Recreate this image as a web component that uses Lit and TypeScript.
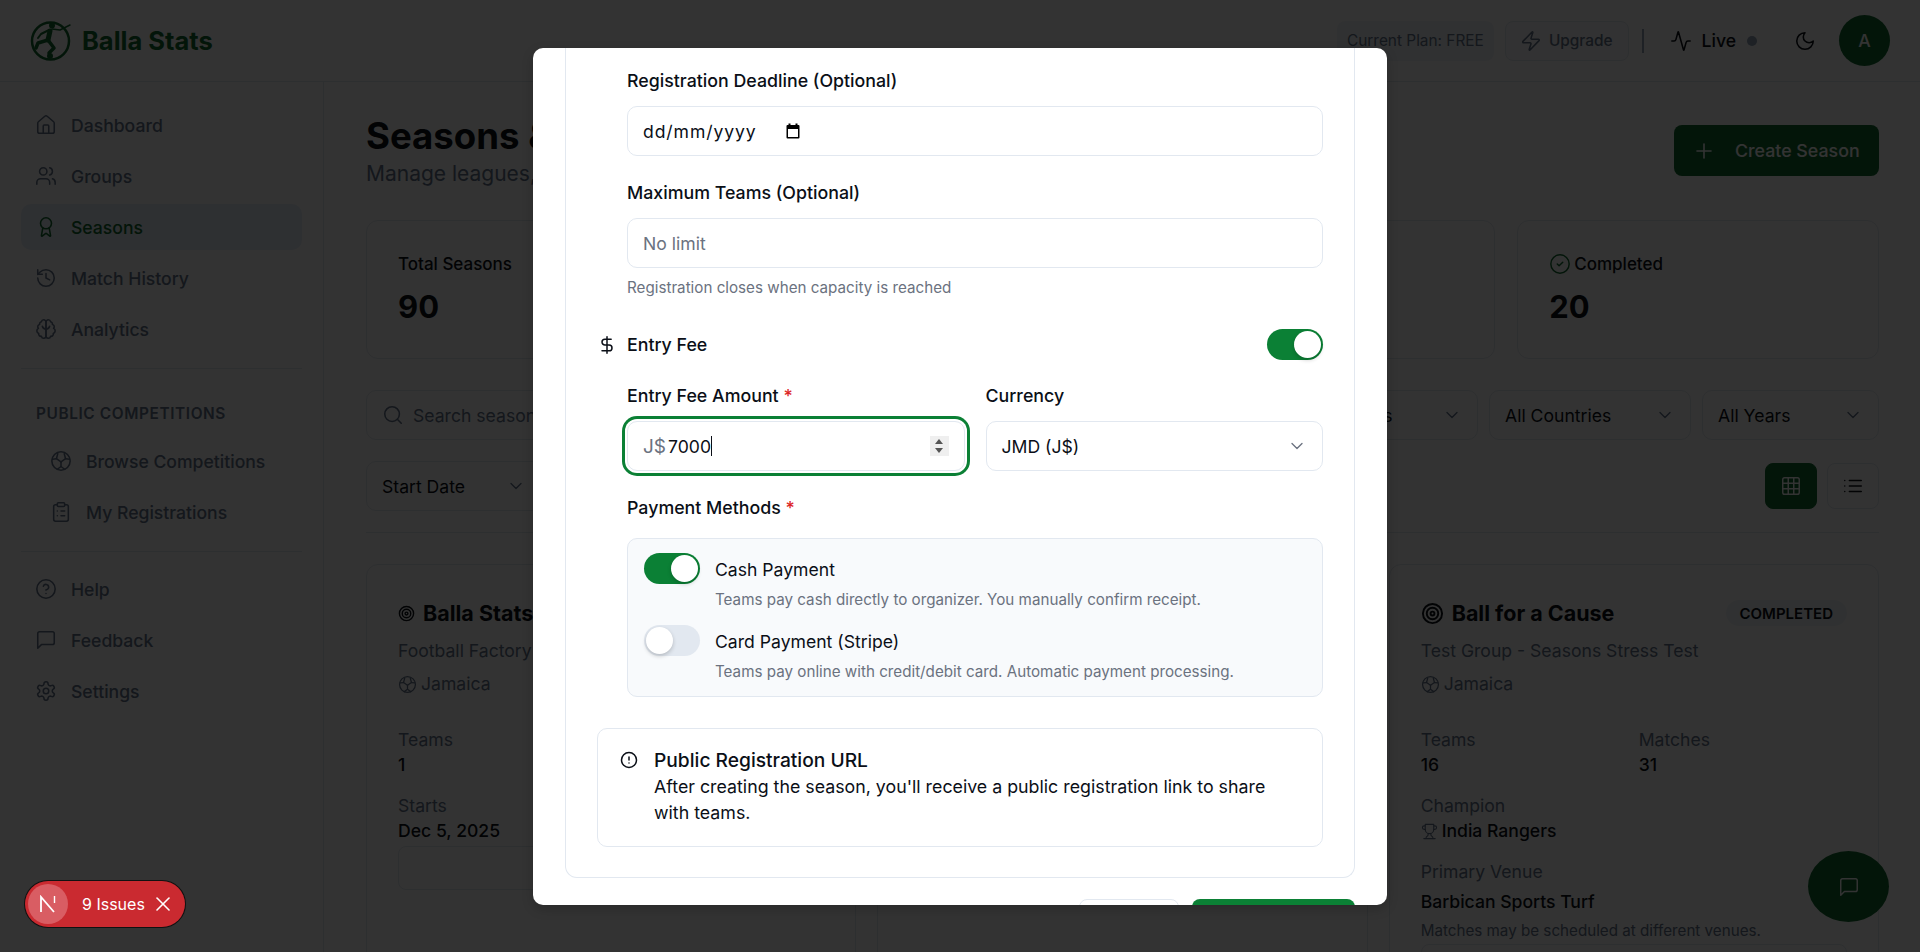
import { LitElement, html, css, svg } from "lit";
import { customElement } from "lit/decorators.js";

const icon = (body: unknown, size = 22, sw = 1.7) => html`<svg
  class="ic"
  width=${size}
  height=${size}
  viewBox="0 0 24 24"
  fill="none"
  stroke="currentColor"
  stroke-width=${sw}
  stroke-linecap="round"
  stroke-linejoin="round"
>${body}</svg>`;

const I = {
  home: svg`<path d="M15 21v-8a1 1 0 0 0-1-1h-4a1 1 0 0 0-1 1v8"/><path d="M3 10a2 2 0 0 1 .709-1.528l7-5.999a2 2 0 0 1 2.582 0l7 5.999A2 2 0 0 1 21 10v9a2 2 0 0 1-2 2H5a2 2 0 0 1-2-2z"/>`,
  users: svg`<path d="M16 21v-2a4 4 0 0 0-4-4H6a4 4 0 0 0-4 4v2"/><circle cx="9" cy="7" r="4"/><path d="M22 21v-2a4 4 0 0 0-3-3.87"/><path d="M16 3.13a4 4 0 0 1 0 7.75"/>`,
  award: svg`<path d="m15.477 12.89 1.515 8.526a.5.5 0 0 1-.81.47l-3.58-2.687a1 1 0 0 0-1.197 0l-3.586 2.686a.5.5 0 0 1-.81-.469l1.514-8.526"/><circle cx="12" cy="8" r="6"/>`,
  history: svg`<path d="M3 12a9 9 0 1 0 9-9 9.75 9.75 0 0 0-6.74 2.74L3 8"/><path d="M3 3v5h5"/><path d="M12 7v5l4 2"/>`,
  brain: svg`<path d="M9.5 2A2.5 2.5 0 0 1 12 4.5v15a2.5 2.5 0 0 1-4.96.44 2.5 2.5 0 0 1-2.96-3.08 3 3 0 0 1-.34-5.58 2.5 2.5 0 0 1 1.32-4.24 2.5 2.5 0 0 1 1.98-3A2.5 2.5 0 0 1 9.5 2Z"/><path d="M14.5 2A2.5 2.5 0 0 0 12 4.5v15a2.5 2.5 0 0 0 4.96.44 2.5 2.5 0 0 0 2.96-3.08 3 3 0 0 0 .34-5.58 2.5 2.5 0 0 0-1.32-4.24 2.5 2.5 0 0 0-1.98-3A2.5 2.5 0 0 0 14.5 2Z"/><path d="M12 12c-2 0-3.5-1-4-3"/><path d="M12 12c2 0 3.5-1 4-3"/>`,
  ball: svg`<circle cx="12" cy="12" r="10"/><path d="M12 13 7 9.5l1.5-5.5"/><path d="M12 13l5-3.5-1.5-5.5"/><path d="M12 13v5l-4 3"/><path d="M12 18l4 3"/><path d="M7 9.5 2.5 10"/><path d="M17 9.5l4.5.5"/>`,
  clipboard: svg`<rect width="8" height="4" x="8" y="2" rx="1"/><path d="M16 4h2a2 2 0 0 1 2 2v14a2 2 0 0 1-2 2H6a2 2 0 0 1-2-2V6a2 2 0 0 1 2-2h2"/><path d="M12 11h4"/><path d="M12 16h4"/><path d="M8 11h.01"/><path d="M8 16h.01"/>`,
  help: svg`<circle cx="12" cy="12" r="10"/><path d="M9.09 9a3 3 0 0 1 5.83 1c0 2-3 3-3 3"/><path d="M12 17h.01"/>`,
  message: svg`<path d="M21 15a2 2 0 0 1-2 2H7l-4 4V5a2 2 0 0 1 2-2h14a2 2 0 0 1 2 2z"/>`,
  gear: svg`<path d="M12.22 2h-.44a2 2 0 0 0-2 2v.18a2 2 0 0 1-1 1.73l-.43.25a2 2 0 0 1-2 0l-.15-.08a2 2 0 0 0-2.73.73l-.22.38a2 2 0 0 0 .73 2.73l.15.1a2 2 0 0 1 1 1.72v.51a2 2 0 0 1-1 1.74l-.15.09a2 2 0 0 0-.73 2.73l.22.38a2 2 0 0 0 2.73.73l.15-.08a2 2 0 0 1 2 0l.43.25a2 2 0 0 1 1 1.73V20a2 2 0 0 0 2 2h.44a2 2 0 0 0 2-2v-.18a2 2 0 0 1 1-1.73l.43-.25a2 2 0 0 1 2 0l.15.08a2 2 0 0 0 2.73-.73l.22-.39a2 2 0 0 0-.73-2.73l-.15-.08a2 2 0 0 1-1-1.74v-.5a2 2 0 0 1 1-1.74l.15-.09a2 2 0 0 0 .73-2.73l-.22-.38a2 2 0 0 0-2.73-.73l-.15.08a2 2 0 0 1-2 0l-.43-.25a2 2 0 0 1-1-1.73V4a2 2 0 0 0-2-2z"/><circle cx="12" cy="12" r="3"/>`,
  zap: svg`<path d="M4 14a1 1 0 0 1-.78-1.63l9.9-10.2a.5.5 0 0 1 .86.46l-1.92 6.02A1 1 0 0 0 13 10h7a1 1 0 0 1 .78 1.63l-9.9 10.2a.5.5 0 0 1-.86-.46l1.92-6.02A1 1 0 0 0 11 14z"/>`,
  activity: svg`<path d="M22 12h-2.48a2 2 0 0 0-1.93 1.46l-2.35 8.36a.25.25 0 0 1-.48 0L9.24 2.18a.25.25 0 0 0-.48 0l-2.35 8.36A2 2 0 0 1 4.49 12H2"/>`,
  moon: svg`<path d="M12 3a6 6 0 0 0 9 9 9 9 0 1 1-9-9Z"/>`,
  search: svg`<circle cx="11" cy="11" r="8"/><path d="m21 21-4.3-4.3"/>`,
  chevron: svg`<path d="m6 9 6 6 6-6"/>`,
  plus: svg`<path d="M5 12h14"/><path d="M12 5v14"/>`,
  grid: svg`<rect width="18" height="18" x="3" y="3" rx="2"/><path d="M3 9h18"/><path d="M3 15h18"/><path d="M9 3v18"/><path d="M15 3v18"/>`,
  list: svg`<path d="M3 12h.01"/><path d="M3 18h.01"/><path d="M3 6h.01"/><path d="M8 12h13"/><path d="M8 18h13"/><path d="M8 6h13"/>`,
  target: svg`<circle cx="12" cy="12" r="10"/><circle cx="12" cy="12" r="6"/><circle cx="12" cy="12" r="2"/>`,
  check: svg`<circle cx="12" cy="12" r="10"/><path d="m9 12 2 2 4-4"/>`,
  trophy: svg`<path d="M6 9H4.5a2.5 2.5 0 0 1 0-5H6"/><path d="M18 9h1.5a2.5 2.5 0 0 0 0-5H18"/><path d="M4 22h16"/><path d="M10 14.66V17c0 .55-.47.98-.97 1.21C7.85 18.75 7 20.24 7 22"/><path d="M14 14.66V17c0 .55.47.98.97 1.21C16.15 18.75 17 20.24 17 22"/><path d="M18 2H6v7a6 6 0 0 0 12 0V2Z"/>`,
  dollar: svg`<line x1="12" x2="12" y1="2" y2="22"/><path d="M17 5H9.5a3.5 3.5 0 0 0 0 7h5a3.5 3.5 0 0 1 0 7H6"/>`,
  alert: svg`<circle cx="12" cy="12" r="10"/><line x1="12" x2="12" y1="8" y2="12"/><line x1="12" x2="12.01" y1="16" y2="16"/>`,
  x: svg`<path d="M18 6 6 18"/><path d="m6 6 12 12"/>`,
};

const navMain = [
  { label: "Dashboard", ic: I.home },
  { label: "Groups", ic: I.users },
  { label: "Seasons", ic: I.award, active: true },
  { label: "Match History", ic: I.history },
  { label: "Analytics", ic: I.brain },
];
const navPublic = [
  { label: "Browse Competitions", ic: I.ball },
  { label: "My Registrations", ic: I.clipboard },
];
const navBottom = [
  { label: "Help", ic: I.help },
  { label: "Feedback", ic: I.message },
  { label: "Settings", ic: I.gear },
];

@customElement("app-root")
export class AppRoot extends LitElement {
  static styles = css`
    :host {
      display: block;
      height: 100vh;
      overflow: hidden;
      position: relative;
      background: #fff;
      color: #0b0f17;
      font-family: Inter, "Liberation Sans", sans-serif;
      font-size: 17.6px;
    }
    * {
      box-sizing: border-box;
    }
    .ic {
      flex: none;
      display: block;
    }

    .topbar {
      height: 82px;
      border-bottom: 1px solid #e2e8f0;
      display: flex;
      align-items: center;
      padding: 0 30px;
    }
    .brand {
      display: flex;
      align-items: center;
      gap: 10px;
      color: #126a30;
      font-size: 25.5px;
      font-weight: 700;
    }
    .top-right {
      margin-left: auto;
      display: flex;
      align-items: center;
    }
    .chip {
      height: 40px;
      border-radius: 8px;
      background: #f1f5f9;
      font-size: 15.4px;
      color: #64748b;
      display: flex;
      align-items: center;
      padding: 0 10px;
      gap: 7px;
    }
    .chip.outline {
      background: #f8fafc;
      border: 1px solid #e2e8f0;
      margin-left: 11px;
      padding: 0 15px 0 14px;
      font-weight: 500;
    }
    .sep {
      width: 2px;
      height: 24px;
      background: #94a3b8;
      margin: 0 26px 0 13px;
    }
    .live {
      display: flex;
      align-items: center;
      gap: 10px;
      font-weight: 500;
    }
    .dot {
      width: 10px;
      height: 10px;
      border-radius: 50%;
      background: #94a3b8;
      margin-left: 1px;
    }
    .moon {
      margin: 0 23px 0 37px;
    }
    .avatar {
      width: 51px;
      height: 51px;
      border-radius: 50%;
      background: #126a30;
      color: #fff;
      font-weight: 500;
      display: flex;
      align-items: center;
      justify-content: center;
    }

    .shell {
      display: grid;
      grid-template-columns: 324px 1fr;
      height: calc(100vh - 82px);
    }
    .side {
      border-right: 1px solid #e2e8f0;
      padding: 20px 21px;
      color: #64748b;
    }
    .nav {
      display: flex;
      flex-direction: column;
      gap: 5px;
    }
    .nav a {
      height: 46px;
      border-radius: 10px;
      display: flex;
      align-items: center;
      gap: 14px;
      padding: 0 14px;
      font-weight: 500;
    }
    .nav a.active {
      background: #e7eef7;
      color: #126a30;
    }
    .nav.sub a {
      padding-left: 29px;
    }
    .rule {
      height: 1px;
      background: #e2e8f0;
      margin: 16px 0;
    }
    .rule.tight {
      margin-bottom: 14px;
    }
    .cap {
      font-size: 15.4px;
      font-weight: 600;
      letter-spacing: 0.6px;
      padding: 19px 15px 14px;
      line-height: 20px;
    }

    .main {
      padding: 0 41px 0 42px;
      overflow: hidden;
    }
    .page-head {
      display: flex;
      justify-content: space-between;
      padding-top: 31px;
      height: 138px;
    }
    h1 {
      margin: 0;
      font-size: 36.6px;
      line-height: 46px;
      font-weight: 700;
      white-space: nowrap;
    }
    .page-head p {
      margin: 2px 0 0;
      font-size: 21px;
      color: #64748b;
    }
    .create {
      margin-top: 12px;
      width: 205px;
      height: 51px;
      border-radius: 8px;
      background: #126a30;
      color: #fff;
      display: flex;
      align-items: center;
      gap: 19px;
      padding: 0 18px;
      font-weight: 500;
      font-size: 17.8px;
    }
    .stats {
      display: grid;
      grid-template-columns: repeat(4, 1fr);
      gap: 22px;
      height: 139px;
    }
    .stat {
      border: 1px solid #e2e8f0;
      border-radius: 12px;
      padding: 30px 31px;
      font-size: 17px;
      font-weight: 500;
    }
    .stat .t {
      display: flex;
      align-items: center;
      gap: 3px;
      height: 26px;
    }
    .stat .t .ic {
      color: #126a30;
    }
    .stat .n {
      font-size: 31px;
      font-weight: 700;
      margin-top: 11px;
    }
    .filters {
      display: flex;
      gap: 11px;
      margin-top: 31px;
    }
    .box {
      height: 50px;
      border: 1px solid #e2e8f0;
      border-radius: 10px;
      display: flex;
      align-items: center;
      padding: 0 15px;
      justify-content: space-between;
    }
    .search {
      flex: 1;
      justify-content: flex-start;
      gap: 9px;
      color: #64748b;
    }
    .box .ic {
      color: #64748b;
    }
    .filters-2 {
      display: flex;
      justify-content: space-between;
      margin-top: 21px;
      padding-bottom: 21px;
      border-bottom: 1px solid #e2e8f0;
    }
    .views {
      display: flex;
      gap: 10px;
      align-items: center;
    }
    .view {
      width: 52px;
      height: 46px;
      border-radius: 8px;
      border: 1px solid #e2e8f0;
      display: flex;
      align-items: center;
      justify-content: center;
    }
    .view.on {
      background: #126a30;
      border-color: #126a30;
      color: #fff;
    }
    .cards {
      display: grid;
      grid-template-columns: repeat(3, 1fr);
      gap: 21px;
      margin-top: 31px;
    }
    .card {
      border: 1px solid #e2e8f0;
      border-radius: 12px;
      padding: 32px 31px;
      height: 500px;
    }
    .card .title {
      display: flex;
      align-items: center;
      gap: 8px;
      font-size: 21.5px;
      font-weight: 700;
      height: 32px;
    }
    .badge {
      margin-left: auto;
      background: #f1f5f9;
      border-radius: 13px;
      height: 26px;
      font-size: 15px;
      font-weight: 600;
      display: flex;
      align-items: center;
      padding: 0 14px;
    }
    .muted {
      color: #64748b;
    }
    .org {
      margin-top: 9px;
      line-height: 26px;
    }
    .country {
      margin-top: 7px;
      line-height: 26px;
      display: flex;
      align-items: center;
      gap: 4px;
    }
    .pair {
      display: grid;
      grid-template-columns: 218px 1fr;
      margin-top: 30px;
    }
    .kv {
      line-height: 25px;
    }
    .kv b {
      display: block;
      font-weight: 500;
      color: #0b0f17;
      line-height: 26px;
    }
    .kv.next {
      margin-top: 15px;
    }
    .champ {
      display: flex !important;
      align-items: center;
      gap: 4px;
    }
    .champ .ic {
      color: #64748b;
    }
    .slot {
      border: 1px solid #e2e8f0;
      border-radius: 8px;
      height: 44px;
      margin-top: 2px;
    }

    .fab {
      position: absolute;
      left: 1808px;
      top: 851px;
      width: 81px;
      height: 71px;
      border-radius: 50%;
      background: #126a30;
      color: #fff;
      display: flex;
      align-items: center;
      justify-content: center;
    }

    .overlay {
      position: absolute;
      inset: 0;
      background: rgba(0, 0, 0, 0.8);
      display: flex;
      align-items: center;
      justify-content: center;
    }
    .modal {
      width: 854px;
      height: 857px;
      background: #fff;
      border-radius: 10px;
      overflow: hidden;
      padding: 0 32px;
      box-shadow: 0 4px 12px rgba(0, 0, 0, 0.2);
      font-size: 17.6px;
    }
    .form {
      border: 1px solid #e2e8f0;
      border-top: 0;
      border-radius: 0 0 12px 12px;
      padding: 20.5px 31px 31px;
      height: 830.5px;
    }
    .indent {
      padding-left: 30px;
    }
    .label {
      font-weight: 500;
      font-size: 17.8px;
      line-height: 26px;
      height: 26px;
      margin-bottom: 12px;
    }
    .label i {
      color: #dc2626;
      font-style: normal;
    }
    .field {
      height: 50px;
      border: 1px solid #e2e8f0;
      border-radius: 10px;
      padding: 0 15px;
      display: flex;
      align-items: center;
      background: #fff;
    }
    .field .ic {
      color: #6b7280;
    }
    .field.date {
      gap: 28px;
    }
    .field.date span {
      letter-spacing: 0.9px;
    }
    .group + .group {
      margin-top: 24px;
    }
    .hint {
      font-size: 15.2px;
      color: #6b7280;
      line-height: 20px;
      margin-top: 10px;
    }
    .ph {
      color: #6b7280;
    }
    .fee-head {
      display: flex;
      align-items: center;
      height: 31px;
      margin-top: 31px;
      font-weight: 500;
      font-size: 17.8px;
    }
    .fee-head .ic {
      margin-right: 10px;
    }
    .switch {
      width: 56px;
      height: 31px;
      border-radius: 16px;
      background: #0b8035;
      position: relative;
      flex: none;
    }
    .switch::after {
      content: "";
      position: absolute;
      top: 2px;
      right: 2px;
      width: 27px;
      height: 27px;
      border-radius: 50%;
      background: #fff;
      box-shadow: 0 2px 4px rgba(0, 0, 0, 0.2);
    }
    .switch.off {
      background: #e2e8f0;
    }
    .switch.off::after {
      right: auto;
      left: 2px;
    }
    .fee-head .switch {
      margin-left: auto;
    }
    .fee-grid {
      display: grid;
      grid-template-columns: 1fr 1fr;
      gap: 21px;
      margin-top: 23px;
    }
    .focus {
      box-shadow: 0 0 0 2px #fff, 0 0 0 5px #0b8035;
      position: relative;
    }
    .prefix {
      color: #6b7280;
      font-size: 19px;
      margin-right: 2px;
    }
    .caret {
      width: 1px;
      height: 20px;
      background: #0b0f17;
    }
    .spin {
      position: absolute;
      right: 15px;
      top: 14px;
      width: 19px;
      height: 20px;
      background: #efefef;
      display: flex;
      flex-direction: column;
      align-items: center;
      justify-content: center;
      gap: 4px;
    }
    .spin s {
      width: 0;
      height: 0;
      border-left: 4px solid transparent;
      border-right: 4px solid transparent;
      border-bottom: 5px solid #555;
    }
    .spin s + s {
      border-bottom: 0;
      border-top: 5px solid #555;
    }
    .between {
      justify-content: space-between;
    }
    .pay-label {
      margin-top: 24px;
      margin-bottom: 17px;
    }
    .methods {
      border: 1px solid #e2e8f0;
      border-radius: 10px;
      background: #f8fafc;
      padding: 14px 16px;
      height: 159px;
    }
    .method {
      display: flex;
      gap: 15px;
      height: 72px;
    }
    .method .name {
      font-weight: 400;
      padding-top: 4px;
      line-height: 26px;
      height: 35px;
    }
    .method .desc {
      font-size: 15.2px;
      line-height: 24px;
      color: #6b7280;
    }
    .notice {
      border: 1px solid #e2e8f0;
      border-radius: 10px;
      height: 119px;
      margin-top: 31px;
      padding: 18px 22px;
      display: flex;
      gap: 16px;
    }
    .notice .ic {
      margin-top: 4px;
    }
    .notice h4 {
      margin: 0;
      font-size: 19.2px;
      font-weight: 500;
      line-height: 26px;
    }
    .notice p {
      margin: 1px 0 0;
      padding-right: 20px;
      line-height: 26px;
      font-size: 17.8px;
    }
    .footer {
      display: flex;
      justify-content: flex-end;
      gap: 13px;
      margin-top: 21px;
    }
    .footer div {
      height: 46px;
      border-radius: 8px;
    }
    .cancel {
      width: 100px;
      border: 1px solid #e2e8f0;
    }
    .submit {
      width: 163px;
      background: #0b8035;
    }

    .issues {
      position: absolute;
      left: 25px;
      top: 881px;
      width: 160px;
      height: 46px;
      border-radius: 23px;
      background: #ca2a30;
      box-shadow: 0 0 0 1px #111;
      color: #fff;
      display: flex;
      align-items: center;
      padding-left: 3px;
      font-size: 16px;
      font-weight: 400;
    }
    .issues .n {
      width: 40px;
      height: 40px;
      border-radius: 50%;
      background: #d95d63;
      display: flex;
      align-items: center;
      justify-content: center;
      margin-right: 14px;
    }
    .issues .c {
      margin-left: 6px;
    }
  `;

  private navItem(n: { label: string; ic: unknown; active?: boolean }) {
    return html`<a class=${n.active ? "active" : ""}>${icon(n.ic)}<span>${n.label}</span></a>`;
  }

  private logo() {
    return html`<svg width="42" height="42" viewBox="0 0 42 42" fill="none" stroke="currentColor" stroke-linecap="round" stroke-linejoin="round">
      <circle cx="20.5" cy="21" r="18.5" stroke-width="2.5" />
      <circle cx="22" cy="5.500" r="3" fill="currentColor" stroke="none" />
      <path stroke-width="5" d="M20 11l-2 9" />
      <path stroke-width="3.5" d="M18 20L8 23l-2 5" />
      <path stroke-width="3.500" d="M18 20l6 8-5 5" />
      <path stroke-width="2" d="M19 10l-8 4-3 4" />
      <path stroke-width="1.500" d="M22 9l8 1 10-5" />
      <circle cx="20" cy="36" r="3" fill="currentColor" stroke="none" />
    </svg>`;
  }

  private background() {
    return html`
      <div class="topbar">
        <div class="brand">${this.logo()}<span>Balla Stats</span></div>
        <div class="top-right">
          <div class="chip">Current Plan: FREE</div>
          <div class="chip outline">${icon(I.zap)}<span>Upgrade</span></div>
          <div class="sep"></div>
          <div class="live">${icon(I.activity)}<span>Live</span><span class="dot"></span></div>
          <div class="moon">${icon(I.moon)}</div>
          <div class="avatar">A</div>
        </div>
      </div>
      <div class="shell">
        <aside class="side">
          <nav class="nav">${navMain.map((n) => this.navItem(n))}</nav>
          <div class="rule"></div>
          <div class="cap">PUBLIC COMPETITIONS</div>
          <nav class="nav sub">${navPublic.map((n) => this.navItem(n))}</nav>
          <div class="rule tight"></div>
          <nav class="nav">${navBottom.map((n) => this.navItem(n))}</nav>
        </aside>
        <main class="main">
          <div class="page-head">
            <div>
              <h1>Seasons &amp;</h1>
              <p>Manage leagues,</p>
            </div>
            <div class="create">${icon(I.plus, 24, 1.6)}<span>Create Season</span></div>
          </div>
          <div class="stats">
            <div class="stat"><div class="t">Total Seasons</div><div class="n">90</div></div>
            <div class="stat"></div>
            <div class="stat"></div>
            <div class="stat"><div class="t">${icon(I.check, 22, 1.6)}Completed</div><div class="n">20</div></div>
          </div>
          <div class="filters">
            <div class="box search">${icon(I.search)}<span>Search seasons</span></div>
            <div class="box" style="width:199px"><span>All Statuses</span>${icon(I.chevron, 20, 1.6)}</div>
            <div class="box" style="width:202px"><span>All Countries</span>${icon(I.chevron, 20, 1.6)}</div>
            <div class="box" style="width:177px"><span>All Years</span>${icon(I.chevron, 20, 1.6)}</div>
          </div>
          <div class="filters-2">
            <div class="box" style="width:176px"><span>Start Date</span>${icon(I.chevron, 20, 1.6)}</div>
            <div class="views">
              <div class="view on">${icon(I.grid, 22, 1.6)}</div>
              <div class="view">${icon(I.list, 22, 1.6)}</div>
            </div>
          </div>
          <div class="cards">
            <div class="card">
              <div class="title">${icon(I.target, 17, 2)}<span>Balla Stats</span></div>
              <div class="org muted">Football Factory</div>
              <div class="country muted">${icon(I.ball, 19, 1.6)}Jamaica</div>
              <div class="pair"><div class="kv muted">Teams<b>1</b></div></div>
              <div class="kv next muted">Starts<b>Dec 5, 2025</b></div>
              <div class="slot"></div>
            </div>
            <div class="card"></div>
            <div class="card">
              <div class="title">${icon(I.target, 23, 2)}<span>Ball for a Cause</span><span class="badge">COMPLETED</span></div>
              <div class="org muted">Test Group - Seasons Stress Test</div>
              <div class="country muted">${icon(I.ball, 19, 1.6)}Jamaica</div>
              <div class="pair">
                <div class="kv muted">Teams<b>16</b></div>
                <div class="kv muted">Matches<b>31</b></div>
              </div>
              <div class="kv next muted">Champion<b class="champ">${icon(I.trophy, 17, 1.6)}India Rangers</b></div>
              <div class="kv next muted">Primary Venue</div>
              <div class="kv"><b style="line-height:36px">Barbican Sports Turf</b></div>
              <div class="muted" style="font-size:15.2px;line-height:22px">Matches may be scheduled at different venues.</div>
              <div class="slot"></div>
            </div>
          </div>
        </main>
      </div>
      <div class="fab">${icon(I.message, 22, 1.6)}</div>
    `;
  }

  private dialog() {
    return html`
      <div class="overlay">
        <div class="modal">
          <div class="form">
            <div class="indent">
              <div class="group">
                <div class="label">Registration Deadline (Optional)</div>
                <div class="field date">
                  <span>dd/mm/yyyy</span>
                  <svg width="16" height="16" viewBox="0 0 16 16" class="ic" style="color:#000">
                    <path fill="currentColor" d="M3.5.5h2V2h5V.5h2V2h1a1 1 0 0 1 1 1v11.5a1 1 0 0 1-1 1h-11a1 1 0 0 1-1-1V3a1 1 0 0 1 1-1h1zM3 6v8h10V6z" />
                  </svg>
                </div>
              </div>
              <div class="group">
                <div class="label">Maximum Teams (Optional)</div>
                <div class="field"><span class="ph">No limit</span></div>
                <div class="hint">Registration closes when capacity is reached</div>
              </div>
            </div>
            <div class="fee-head">
              ${icon(I.dollar, 20, 1.8)}
              <span>Entry Fee</span>
              <span class="switch"></span>
            </div>
            <div class="indent">
              <div class="fee-grid">
                <div>
                  <div class="label">Entry Fee Amount <i>*</i></div>
                  <div class="field focus">
                    <span class="prefix">J$</span><span>7000</span><span class="caret"></span>
                    <span class="spin"><s></s><s></s></span>
                  </div>
                </div>
                <div>
                  <div class="label">Currency</div>
                  <div class="field between"><span>JMD (J$)</span>${icon(I.chevron, 20, 1.6)}</div>
                </div>
              </div>
              <div class="label pay-label">Payment Methods <i>*</i></div>
              <div class="methods">
                <div class="method">
                  <span class="switch"></span>
                  <div>
                    <div class="name">Cash Payment</div>
                    <div class="desc">Teams pay cash directly to organizer. You manually confirm receipt.</div>
                  </div>
                </div>
                <div class="method">
                  <span class="switch off"></span>
                  <div>
                    <div class="name">Card Payment (Stripe)</div>
                    <div class="desc">Teams pay online with credit/debit card. Automatic payment processing.</div>
                  </div>
                </div>
              </div>
            </div>
            <div class="notice">
              ${icon(I.alert, 18, 2)}
              <div>
                <h4>Public Registration URL</h4>
                <p>After creating the season, you'll receive a public registration link to share with teams.</p>
              </div>
            </div>
          </div>
          <div class="footer"><div class="cancel"></div><div class="submit"></div></div>
        </div>
      </div>
      <div class="issues">
        <span class="n">
          <svg width="20" height="18" viewBox="0 0 20 18" fill="none" stroke="#fff" stroke-width="1.8">
            <path d="M3 17V2l13 15" />
            <path d="M16.5 1v7" stroke-width="1.4" />
          </svg>
        </span>
        <span>9 Issues</span>
        <span class="c">${icon(I.x, 24, 1.6)}</span>
      </div>
    `;
  }

  render() {
    return html`${this.background()}${this.dialog()}`;
  }
}
